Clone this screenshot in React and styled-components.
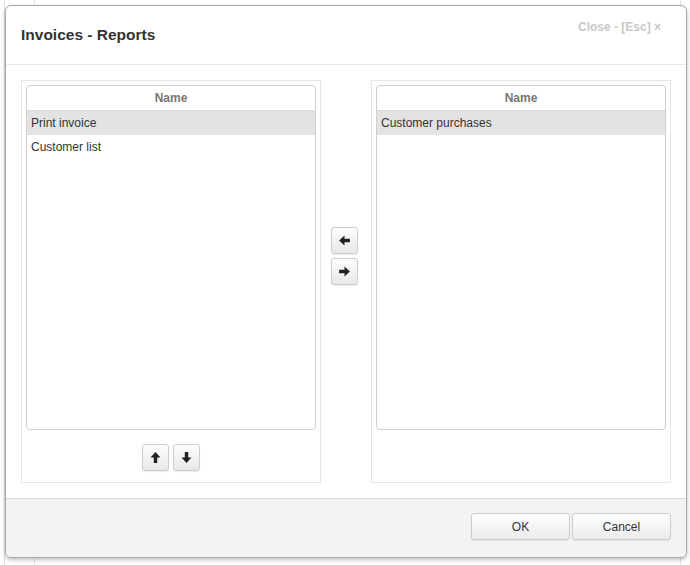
import React from "react";
import styled, { createGlobalStyle } from "styled-components";

const Global = createGlobalStyle`
  html, body { margin: 0; padding: 0; }
  body {
    width: 690px;
    height: 565px;
    overflow: hidden;
    font-family: "Liberation Sans", Arial, sans-serif;
    background-color: #fff;
    background-image:
      linear-gradient(#e4e4e4, #e4e4e4),
      linear-gradient(#e4e4e4, #e4e4e4),
      linear-gradient(#e4e4e4, #e4e4e4);
    background-size: 1px 100%, 1px 100%, 1px 100%;
    background-position: 4px 0, 34px 0, 680px 0;
    background-repeat: no-repeat;
  }
`;

const Dialog = styled.div`
  margin: 5px 0 0 5px;
  width: 680px;
  height: 551px;
  border: 1px solid #a8a8a8;
  border-radius: 6px;
  background: #fff;
  box-shadow: 0 2px 4px rgba(0, 0, 0, 0.25);
  display: flex;
  flex-direction: column;
  overflow: hidden;
`;

const Header = styled.div`
  flex: none;
  height: 58px;
  border-bottom: 1px solid #e8e8e8;
  display: flex;
  justify-content: space-between;
  padding: 0 25px 0 15px;
`;

const Title = styled.h3`
  margin: 20px 0 0;
  font-size: 15.5px;
  font-weight: bold;
  color: #333;
`;

const Close = styled.span`
  margin-top: 14px;
  font-size: 12px;
  font-weight: bold;
  color: #c8c8c8;
`;

const Body = styled.div`
  flex: 1;
  min-height: 0;
  display: flex;
  padding: 15px;
  align-items: stretch;
`;

const Panel = styled.div`
  flex: none;
  width: 290px;
  border: 1px solid #e6e6e6;
  padding: 4px;
  display: flex;
  flex-direction: column;
`;

const List = styled.div`
  flex: none;
  height: 343px;
  border: 1px solid #cfcfcf;
  border-radius: 4px;
  overflow: hidden;
`;

const ListHead = styled.div`
  height: 24px;
  line-height: 24px;
  border-bottom: 1px solid #dadada;
  text-align: center;
  font-size: 12px;
  font-weight: bold;
  color: #777;
`;

const Row = styled.div`
  height: 24px;
  line-height: 24px;
  padding-left: 4px;
  font-size: 12px;
  color: #333;
  background: ${(p) => (p.selected ? "#e3e3e3" : "transparent")};
`;

const Middle = styled.div`
  flex: none;
  width: 50px;
  display: flex;
  flex-direction: column;
  align-items: center;
  justify-content: center;
  gap: 4px;
  padding-right: 3px;
  padding-bottom: 52px;
  box-sizing: border-box;
`;

const Tools = styled.div`
  display: flex;
  justify-content: center;
  gap: 4px;
  margin-top: 14px;
  padding-right: 1px;
`;

const IconButton = styled.button`
  width: 27px;
  height: 27px;
  padding: 0;
  border: 1px solid #cdcdcd;
  border-radius: 3px;
  background: linear-gradient(#fdfdfd, #e8e8e8);
  box-shadow: 0 1px 1px rgba(0, 0, 0, 0.08);
  display: flex;
  align-items: center;
  justify-content: center;
`;

const Footer = styled.div`
  flex: none;
  height: 59px;
  border-top: 1px solid #dcdcdc;
  background: #f3f3f3;
  display: flex;
  justify-content: flex-end;
  align-items: flex-start;
  gap: 2px;
  padding: 14px 15px 0 0;
  box-sizing: border-box;
`;

const Button = styled.button`
  width: 99px;
  height: 27px;
  border: 1px solid #cccccc;
  border-radius: 3px;
  background: linear-gradient(#fefefe, #ebebeb);
  box-shadow: 0 1px 1px rgba(0, 0, 0, 0.06);
  font-family: "Liberation Sans", Arial, sans-serif;
  font-size: 12px;
  color: #333;
`;

const rot = { left: 180, right: 0, up: -90, down: 90 };

function Arrow({ dir }) {
  return (
    <svg width="13" height="13" viewBox="0 0 12 12" style={{ transform: `rotate(${rot[dir]}deg)` }}>
      <path d="M1 4.4h5V1.4L11 6 6 10.6V7.6H1z" fill="#222" />
    </svg>
  );
}

function ListBox({ rows }) {
  return (
    <List>
      <ListHead>Name</ListHead>
      {rows.map((r, i) => (
        <Row key={i} selected={i === 0}>
          {r}
        </Row>
      ))}
    </List>
  );
}

export default function App() {
  return (
    <>
      <Global />
      <Dialog>
        <Header>
          <Title>Invoices - Reports</Title>
          <Close>Close - [Esc] ×</Close>
        </Header>
        <Body>
          <Panel>
            <ListBox rows={["Print invoice", "Customer list"]} />
            <Tools>
              <IconButton>
                <Arrow dir="up" />
              </IconButton>
              <IconButton>
                <Arrow dir="down" />
              </IconButton>
            </Tools>
          </Panel>
          <Middle>
            <IconButton>
              <Arrow dir="left" />
            </IconButton>
            <IconButton>
              <Arrow dir="right" />
            </IconButton>
          </Middle>
          <Panel>
            <ListBox rows={["Customer purchases"]} />
          </Panel>
        </Body>
        <Footer>
          <Button>OK</Button>
          <Button>Cancel</Button>
        </Footer>
      </Dialog>
    </>
  );
}
